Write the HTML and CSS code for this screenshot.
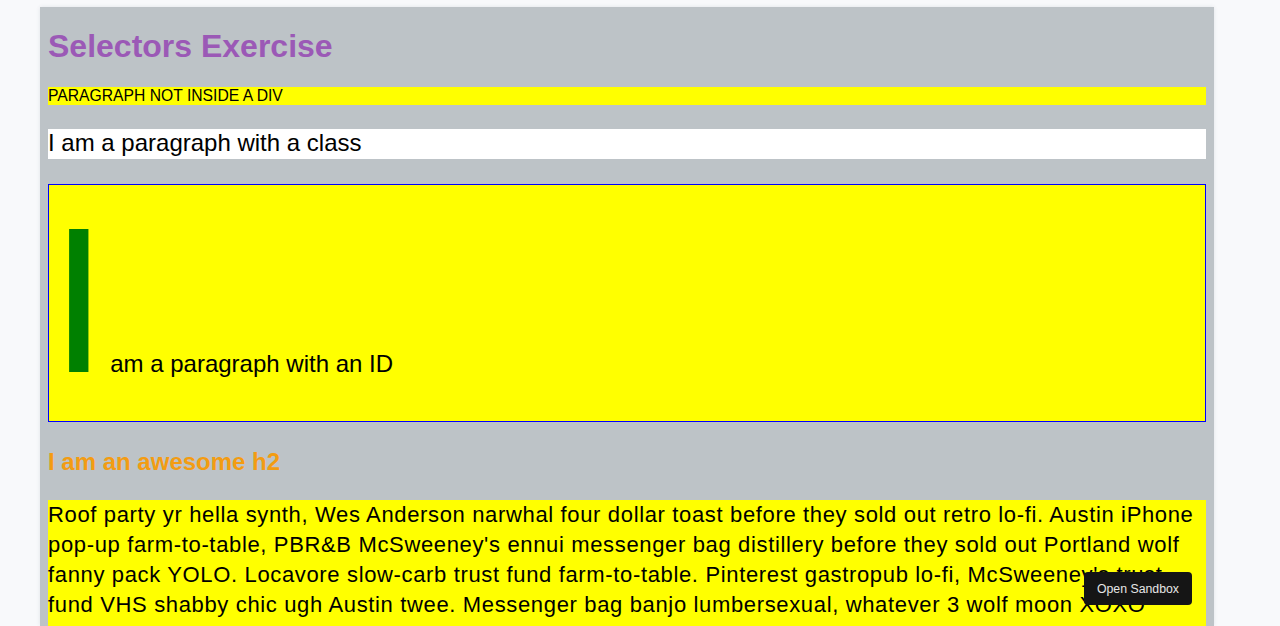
FILE: index.html
```html
<!DOCTYPE html>
<html lang="en">
<head>
<meta charset="utf-8">
<title>Selectors Exercise</title>
<link rel="stylesheet" href="styles.css">
</head>
<body>
  <div class="page">
    <div class="frame">
      <div class="doc">
        <h1 class="title">Selectors Exercise</h1>
        <p class="outside">Paragraph not inside a div</p>
        <p class="with-class">I am a paragraph with a class</p>
        <div class="id-box">
          <p class="with-id">I am a paragraph with an ID</p>
        </div>
        <h2 class="awesome">I am an awesome h2</h2>
        <p class="ipsum">Roof party yr hella synth, Wes Anderson narwhal four dollar toast before they sold out retro lo-fi. Austin iPhone pop-up farm-to-table, PBR&amp;B McSweeney's ennui messenger bag distillery before they sold out Portland wolf fanny pack YOLO. Locavore slow-carb trust fund farm-to-table. Pinterest gastropub lo-fi, McSweeney's trust fund VHS shabby chic ugh Austin twee. Messenger bag banjo lumbersexual, whatever 3 wolf moon XOXO fingerstache Tumblr small batch.</p>
      </div>
      <button class="open-sandbox" type="button">Open Sandbox</button>
    </div>
  </div>
</body>
</html>
```
FILE: styles.css
```css
html, body {
  margin: 0;
  padding: 0;
  height: 100%;
  overflow: hidden;
}

body {
  background: #f8f9fb;
  font-family: "Liberation Sans", Arial, sans-serif;
}

.page {
  padding: 7px 0 0 40px;
  height: 100%;
  box-sizing: border-box;
}

.frame {
  position: relative;
  width: 1174px;
  height: 619px;
  background: #bdc3c7;
  box-shadow: 0 0 4px rgba(60, 70, 90, 0.12);
  overflow: hidden;
}

.doc {
  display: flow-root;
  padding: 0 8px;
}

.title {
  margin: 21px 0 22px;
  font-size: 32px;
  font-weight: bold;
  line-height: normal;
  color: #9b59b6;
}

.outside {
  margin: 0 0 24px;
  font-size: 15.7px;
  line-height: 17.6px;
  text-transform: uppercase;
  background: #ffff00;
  color: #000;
}

.with-class {
  margin: 0 0 25px;
  padding-bottom: 2px;
  font-size: 24px;
  line-height: 28px;
  background: #fff;
  color: #000;
}

.id-box {
  border: 1px solid #0000ff;
  background: #ffff00;
  padding: 6px 1px 10px 1px;
}

.with-id {
  margin: 0;
  font-size: 24px;
  line-height: normal;
  color: #000;
}

.with-id::first-letter {
  font-size: 207px;
  line-height: 220px;
  letter-spacing: -4px;
  color: #008000;
}

.awesome {
  margin: 26px 0 24px;
  font-size: 24px;
  font-weight: bold;
  line-height: normal;
  color: #f39c12;
}

.ipsum {
  margin: 0;
  font-size: 22px;
  letter-spacing: 0.65px;
  line-height: 30px;
  background: #ffff00;
  color: #000;
}

.open-sandbox {
  position: absolute;
  right: 22px;
  bottom: 21px;
  height: 33px;
  padding: 0 13px;
  border: 0;
  border-radius: 4px;
  background: #151515;
  color: #e6e6e6;
  font-family: "Liberation Sans", Arial, sans-serif;
  font-size: 12.3px;
  cursor: pointer;
}
```
